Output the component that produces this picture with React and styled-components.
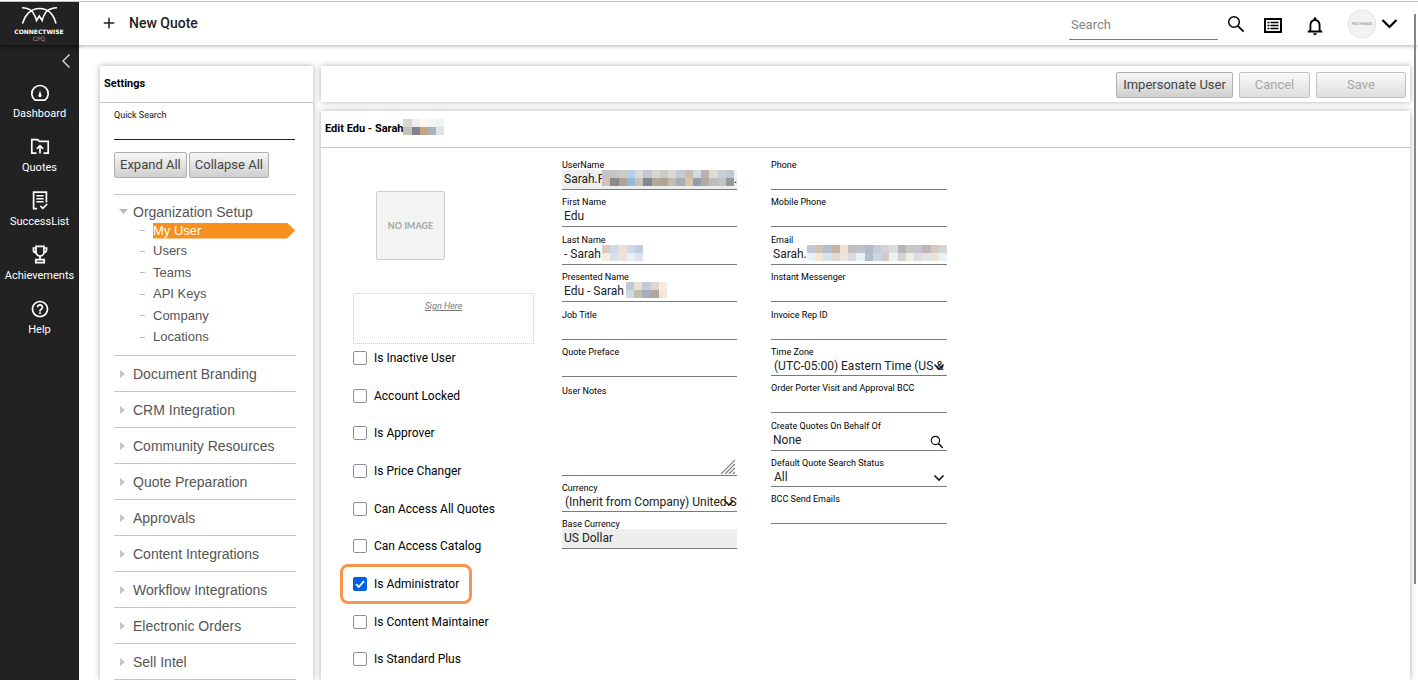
import React, { useState } from 'react';
import styled, { createGlobalStyle, css } from 'styled-components';
import { MdAdd, MdHelpOutline, MdNotificationsNone } from 'react-icons/md';

const GlobalStyles = createGlobalStyle`
  :root {
    --ink: #212121;
    --line: #c6c6c6;
    --field-line: #7a7a7a;
    --orange: #f7901e;
    --blue: #0060df;
    --nav: #222222;
  }

  * {
    box-sizing: border-box;
    margin: 0;
    padding: 0;
  }

  body {
    padding-top: 1px;
    background: #fff;
    color: #000;
    font-family: Roboto, 'Liberation Sans', sans-serif;
    font-size: 12px;
  }

  input, select, textarea, button {
    font-family: inherit;
  }
`;

const Shell = styled.div`
  position: relative;
  display: flex;
  height: calc(100vh - 1px);
  overflow: hidden;
  border-top: 1px solid #c4c4c4;
`;

const SideNav = styled.nav`
  flex: 0 0 79px;
  background: var(--nav);
  display: flex;
  flex-direction: column;
`;

const Brand = styled.a`
  display: block;
  height: 43px;
  box-shadow: 0 2px 4px rgba(0, 0, 0, 0.5);

  svg {
    display: block;
  }
`;

const Collapse = styled.button`
  align-self: flex-end;
  width: 14px;
  height: 16px;
  margin: 8px 6px 14px 0;
  border: 0;
  background: none;
`;

const NavItem = styled.a`
  display: flex;
  flex-direction: column;
  align-items: center;
  gap: 4px;
  height: 54px;
  color: #fff;
  font-size: 11px;
  line-height: 14px;
  text-decoration: none;

  svg {
    width: 20px;
    height: 20px;
  }
`;

const Page = styled.div`
  flex: 1;
  min-width: 0;
  display: flex;
  flex-direction: column;
`;

const Header = styled.header`
  flex: 0 0 43px;
  display: flex;
  align-items: center;
  padding: 0 20px 0 21px;
  background: #fff;
  box-shadow: 0 1px 4px rgba(0, 0, 0, 0.3);
`;

const NewQuote = styled.button`
  display: flex;
  align-items: center;
  gap: 11px;
  padding-bottom: 1px;
  border: 0;
  background: none;
  color: var(--ink);
  font-size: 14px;
  font-weight: 500;

  svg {
    width: 18px;
    height: 18px;
  }
`;

const SearchInput = styled.input`
  width: 149px;
  height: 30px;
  margin: 2px 9px 0 auto;
  padding: 0 2px;
  border: 0;
  border-bottom: 1px solid var(--field-line);
  font-size: 13px;
  outline: none;

  &::placeholder {
    color: #858585;
  }
`;

const HeaderIcons = styled.div`
  display: flex;
  align-items: center;
  gap: 18px;
`;

const IconButton = styled.button`
  display: flex;
  border: 0;
  background: none;
  color: #000;
`;

const ListButton = styled(IconButton)`
  padding-top: 4px;
`;

const BellButton = styled(IconButton)`
  padding: 4px 3px 0;
`;

const UserMenu = styled(IconButton)`
  align-items: center;
  gap: 4px;
`;

const Body = styled.main`
  flex: 1;
  min-height: 0;
  display: flex;
  gap: 8px;
  padding: 21px 8px 0 21px;
`;

const Card = styled.section`
  background: #fff;
  box-shadow: 0 0 6px rgba(0, 0, 0, 0.32);
`;

const SettingsCard = styled(Card)`
  flex: 0 0 213px;
`;

const CardTitle = styled.h2`
  display: flex;
  align-items: center;
  height: 37px;
  padding: 0 4px 2px;
  border-bottom: 1px solid var(--line);
  font-size: 11px;
  font-weight: 700;
`;

const SettingsBody = styled.div`
  padding: 5px 17px 0 14px;
`;

const QuickSearch = styled.label`
  display: block;
  padding-right: 1px;
  font-size: 9px;
  line-height: 14px;
  color: #111;

  input {
    display: block;
    width: 100%;
    height: 18px;
    border: 0;
    border-bottom: 1px solid #222;
    outline: none;
  }
`;

const ButtonRow = styled.div`
  display: flex;
  gap: 2px;
  padding: 12px 0 16px;
`;

const Button = styled.button`
  height: 26px;
  min-width: ${({ $width }) => $width || 0}px;
  padding: 0 5px 2px;
  border: 1px solid #b0b0b0;
  border-radius: 2px;
  background: linear-gradient(#f6f6f6, #cfcfcf);
  color: #444;
  font-size: 13px;
  white-space: nowrap;

  &:disabled {
    border-color: #c2c2c2;
    background: linear-gradient(#fafafa, #dedede);
    color: #a8a8a8;
  }
`;

const Tree = styled.ul`
  list-style: none;
  font-family: 'Liberation Sans', Arial, sans-serif;
`;

const TreeGroup = styled.li`
  border-top: 1px solid var(--line);
  padding-bottom: ${({ $open }) => ($open ? 7 : 0)}px;

  &:last-child {
    border-bottom: 1px solid var(--line);
  }
`;

const GroupButton = styled.button`
  display: flex;
  align-items: center;
  gap: 5px;
  width: 100%;
  height: ${({ $open }) => ($open ? 26 : 35)}px;
  padding: ${({ $open }) => ($open ? '7px 0 0 5px' : '0 0 0 5px')};
  border: 0;
  background: none;
  color: #555;
  font-size: 14px;
  text-align: left;

  svg {
    flex: none;
    width: 9px;
    height: 9px;
  }
`;

const SubList = styled.ul`
  list-style: none;
`;

const SubItem = styled.li`
  display: flex;
  align-items: center;
  height: 21px;
  padding-left: 26px;

  &:nth-child(even) {
    height: 22px;
  }

  &::before {
    content: '';
    width: 5px;
    height: 1px;
    margin-right: 8px;
    background: #bdbdbd;
  }

  a {
    flex: 1;
    margin-right: 1px;
    color: #555;
    font-size: 13px;
    line-height: 16px;
    text-decoration: none;
  }

  ${({ $active }) =>
    $active &&
    css`
      height: 19px;

      a {
        background: var(--orange);
        color: #fff;
        clip-path: polygon(0 0, 134px 0, 100% 50%, 134px 100%, 0 100%);
      }
    `}
`;

const Content = styled.div`
  flex: 1;
  min-width: 0;
  display: flex;
  flex-direction: column;
  gap: 9px;
`;

const Toolbar = styled(Card)`
  display: flex;
  justify-content: flex-end;
  align-items: center;
  gap: 6px;
  flex: 0 0 36px;
  padding: 2px 4px 0;
`;

const EditCard = styled(Card)`
  flex: 1;
  min-height: 0;
`;

const Form = styled.form`
  display: flex;
  padding: 4px 32px 0;
`;

const Profile = styled.div`
  flex: 0 0 181px;
  margin-right: 28px;
`;

const NoImage = styled.div`
  display: grid;
  place-items: center;
  width: 69px;
  height: 69px;
  margin: 39px 0 33px 23px;
  border: 1px solid #ccc;
  border-radius: 2px;
  background: #f3f3f3;
  color: #ababab;
  font-family: Lato, sans-serif;
  font-size: 9px;
  font-weight: 900;
`;

const SignBox = styled.div`
  height: 51px;
  margin-bottom: 7px;
  padding-top: 4px;
  border: 1px dotted #ccc;
  text-align: center;

  a {
    color: #777;
    font-size: 9px;
    font-style: italic;
    line-height: 14px;
  }
`;

const CheckList = styled.div`
  display: grid;
  grid-auto-rows: 1fr;
  justify-items: start;
  align-items: start;
  height: 339px;
`;

const CheckLabel = styled.label`
  position: relative;
  display: flex;
  align-items: center;
  gap: 7px;
  font-size: 12px;
  line-height: 14px;

  ${({ $highlight }) =>
    $highlight &&
    css`
      &::after {
        content: '';
        position: absolute;
        inset: -13px;
        border: 3px solid #f8954b;
        border-radius: 8px;
        pointer-events: none;
      }
    `}
`;

const CheckBox = styled.input`
  appearance: none;
  width: 14px;
  height: 14px;
  border: 1px solid #8f8f9d;
  border-radius: 2px;
  background: #fff;

  &:checked {
    border-color: var(--blue);
    background: var(--blue);
  }
`;

const Tick = styled.svg`
  position: absolute;
  top: 0;
  left: 0;
  width: 14px;
  height: 14px;
  pointer-events: none;
`;

const FieldColumn = styled.div`
  flex: 0 0 ${({ $width }) => $width}px;
  margin-right: 34px;
`;

const FieldGroup = styled.div`
  display: grid;
  grid-auto-rows: 1fr;
  height: 188px;
`;

const FieldBox = styled.div`
  display: flex;
  flex-direction: column;
  justify-content: flex-end;
  height: ${({ $height }) => $height}px;
  min-height: 0;
`;

const FieldLabel = styled.label`
  font-size: 9px;
  line-height: 10px;
`;

const Control = styled.div`
  position: relative;
  display: flex;
`;

const control = css`
  display: block;
  width: 100%;
  border: 0;
  border-bottom: 1px solid var(--field-line);
  border-radius: 0;
  background: transparent;
  color: var(--ink);
  font-size: 12px;
  outline: none;
`;

const TextInput = styled.input`
  ${control}
  height: 20px;
  padding: 0 2px 1px;

  &:read-only {
    background: #eeeeee;
  }
`;

const Select = styled.select`
  ${control}
  appearance: none;
  height: 19px;
  padding-left: 3px;
`;

const TextArea = styled.textarea`
  ${control}
  height: 80px;
  resize: none;
`;

const EndIcon = styled.svg`
  position: absolute;
  right: 2px;
  bottom: ${({ $bottom }) => $bottom}px;
  pointer-events: none;
`;

const LookupButton = styled(IconButton)`
  position: absolute;
  right: 3px;
  bottom: 2px;
`;

const Mosaic = styled.span`
  display: grid;
  grid-template-columns: repeat(${({ $cols }) => $cols}, 1fr);
  width: ${({ $width }) => $width}px;
  height: 16px;
`;

const Cell = styled.i`
  background: #${({ $color }) => $color};
`;

const TitleMask = styled.span`
  padding-bottom: 3px;
`;

const Cover = styled.span`
  position: absolute;
  top: 0;
  left: ${({ $left }) => $left}px;
  display: flex;
  align-items: end;
  pointer-events: none;
`;

const Scrollbar = styled.div`
  position: absolute;
  top: 12px;
  right: 2px;
  width: 2px;
  height: 84%;
  background: #868686;
`;

const masks = {
  title: [
    'd3d7cf f0edef fff9f0 f4f6f6 edf3f2',
    'c2c3b5 808488 c7a382 a3b5b8 dce7e3',
  ],
  userName: [
    'c3c3c6 c8c5c6 cfccc8 b5cfe9 dad9de c4c7cd d6d6d0 cdc9cb d9dad5 c6c9cf c8beb3 cfdae2 bab2b0 dedcd0 c6d0d5 c0c8d0',
    'd0c1ba 8b8b8b aea595 97b9de c8c4ba 85868e b3a99a b0a596 c4bbb5 a9aeb6 d6c4a3 929cac b4aa9f bbbcbc bfc6bf 92999f',
  ],
  lastName: [
    'dbcabb cdd9e6 ecdfd5 cdd7e7 c1cee0',
    'f9ebe0 d9dfea e9e2e0 e5eff4 dde3ee',
  ],
  presented: [
    'c2c8d0 e3e4d6 c6cad6 e0d8ce f6eae1',
    'c9dbe7 c5bca5 a8adbd b5a598 f5e6da',
  ],
  email: [
    'c2c8d5 d0c5b3 b4bfd1 c4b2a3 eee0d6 c6bcbd bdc2cb b1b8ca c2cbd0 d1d3d8 d8dcda b4b5ba c7c8c5 c5c4cf c2b4b0 d6c9c1 d2d5da',
    'eaf2f6 f1e8da d5e4ea dfd8d2 ede3dc dcdbe1 e8f0f3 b2bfc9 cad5e7 d1cac8 edf0ef d6d0d2 f3ece4 dadde3 e0e3e8 ede4d8 e8f1f6',
  ],
};

function Mask({ name, width }) {
  const rows = masks[name].map((row) => row.split(' '));
  return (
    <Mosaic $cols={rows[0].length} $width={width}>
      {rows.flat().map((color, i) => (
        <Cell key={i} $color={color} />
      ))}
    </Mosaic>
  );
}

function Logo() {
  return (
    <svg width="79" height="43" viewBox="0 2 79 43">
      <g fill="none" stroke="#fff" strokeWidth="1.6">
        <path d="M22.5 23.5C24.5 16 30 8.5 39.5 8.5S54 16 56 23.5" />
        <path d="M22 7.7C31 8 34 12 36.5 20.5L39.3 16L42.1 20.5C44.5 12 48 8 57 7.7" />
      </g>
      <text
        x="39"
        y="34"
        fill="#fff"
        fontFamily="'DejaVu Sans', sans-serif"
        fontSize="6"
        fontWeight="700"
        textAnchor="middle"
      >
        CONNECTWISE
      </text>
      <text
        x="39"
        y="41"
        fill="#999"
        fontFamily="'DejaVu Sans', sans-serif"
        fontSize="6"
        textAnchor="middle"
      >
        CPQ
      </text>
    </svg>
  );
}

const GaugeIcon = () => (
  <svg viewBox="0 0 20 20" fill="none" stroke="#fff" strokeWidth="1.7">
    <path d="M5 17.2A8.2 8.2 0 1 1 15 17.2Z" strokeLinejoin="round" />
    <path d="M10 7.5l1.4 4.4a1.5 1.5 0 1 1-2.8 0z" fill="#fff" stroke="none" />
  </svg>
);

const FolderUpIcon = () => (
  <svg viewBox="0 0 20 20" fill="none" stroke="#fff" strokeWidth="1.7">
    <path d="M6.5 16.2H1.8V2.6H7.6L9.4 4.4H18.2V16.2H13.5" />
    <path d="M10 16.5V9.5M6.8 11.8L10 8.6L13.2 11.8" />
  </svg>
);

const ListCheckIcon = () => (
  <svg viewBox="0 0 20 20" fill="none" stroke="#fff" strokeWidth="1.7">
    <path d="M7 17.6H3.6V1.2H16.4V11.5" />
    <path d="M6.4 4.8H13.6M6.4 7.8H13.6M6.4 10.8H13.6" strokeWidth="1.5" />
    <path d="M10.4 15L12.8 17.4L17.2 13" />
  </svg>
);

const TrophyIcon = () => (
  <svg viewBox="0 0 20 20" fill="none" stroke="#fff" strokeWidth="1.7">
    <path d="M6 1.4H14V7A4 4 0 0 1 6 7Z" />
    <path d="M6 3H3.4V4.8A3 3 0 0 0 6.4 7.8M14 3H16.6V4.8A3 3 0 0 1 13.6 7.8" />
    <path d="M10 11V14.5M5.8 14.6H14.2V17.6H5.8Z" />
  </svg>
);

const SearchIcon = ({ size }) => (
  <svg width={size} height={size} viewBox="0 0 18 18" fill="none" stroke="#000">
    <circle cx="7" cy="7" r="5.3" strokeWidth="1.5" />
    <path d="M10.8 10.8L16.6 16.6" strokeWidth="1.8" />
  </svg>
);

const ListBoxIcon = () => (
  <svg width="20" height="18" viewBox="0 0 20 18">
    <rect x="2" y="2" width="16" height="13" fill="none" stroke="#000" strokeWidth="2" />
    <path
      d="M4.5 5.5h2M7.5 5.5h8M4.5 8.5h2M7.5 8.5h8M4.5 11.5h2M7.5 11.5h8"
      stroke="#000"
      strokeWidth="1.6"
    />
  </svg>
);

const Avatar = () => (
  <svg width="30" height="30" viewBox="0 0 30 30">
    <circle cx="15" cy="15" r="14" fill="#f2f2f2" stroke="#e4e4e4" />
    <text
      x="15"
      y="16"
      fill="#a5a5a5"
      fontFamily="Lato, sans-serif"
      fontSize="4"
      fontWeight="900"
      textAnchor="middle"
    >
      NO IMAGE
    </text>
  </svg>
);

function Field({ id, label, value = '', height, readOnly, mask, end }) {
  return (
    <FieldBox $height={height}>
      <FieldLabel htmlFor={id}>{label}</FieldLabel>
      <Control>
        <TextInput
          id={id}
          defaultValue={value}
          {...(readOnly ? { readOnly: true } : {})}
        />
        {mask && (
          <Cover $left={mask.left}>
            <Mask name={mask.name} width={mask.width} />
            {mask.tail}
          </Cover>
        )}
        {end}
      </Control>
    </FieldBox>
  );
}

function SelectField({ id, label, value }) {
  return (
    <FieldBox $height={36}>
      <FieldLabel htmlFor={id}>{label}</FieldLabel>
      <Control>
        <Select id={id} defaultValue={value}>
          <option>{value}</option>
        </Select>
        <EndIcon $bottom={5} width="12" height="8" viewBox="0 0 12 8">
          <path d="M1.5 1.5L6 6L10.5 1.5" fill="none" stroke="#111" strokeWidth="1.6" />
        </EndIcon>
      </Control>
    </FieldBox>
  );
}

const navItems = [
  ['Dashboard', GaugeIcon],
  ['Quotes', FolderUpIcon],
  ['SuccessList', ListCheckIcon],
  ['Achievements', TrophyIcon],
  ['Help', MdHelpOutline],
];

const orgPages = ['My User', 'Users', 'Teams', 'API Keys', 'Company', 'Locations'];

const groups = [
  'Document Branding',
  'CRM Integration',
  'Community Resources',
  'Quote Preparation',
  'Approvals',
  'Content Integrations',
  'Workflow Integrations',
  'Electronic Orders',
  'Sell Intel',
];

const permissions = [
  'Is Inactive User',
  'Account Locked',
  'Is Approver',
  'Is Price Changer',
  'Can Access All Quotes',
  'Can Access Catalog',
  'Is Administrator',
  'Is Content Maintainer',
  'Is Standard Plus',
];

function App() {
  const [granted, setGranted] = useState({ 'Is Administrator': true });

  const toggle = (name) =>
    setGranted((prev) => ({ ...prev, [name]: !prev[name] }));

  return (
    <>
      <GlobalStyles />
      <Shell>
        <SideNav>
          <Brand href="#home">
            <Logo />
          </Brand>
          <Collapse type="button" aria-label="Collapse menu">
            <svg width="14" height="16" viewBox="0 0 14 16">
              <path d="M10.5 1.5L4 8L10.5 14.5" fill="none" stroke="#ccc" strokeWidth="1.5" />
            </svg>
          </Collapse>
          {navItems.map(([name, Icon]) => (
            <NavItem key={name} href={`#${name}`}>
              <Icon />
              {name}
            </NavItem>
          ))}
        </SideNav>

        <Page>
          <Header>
            <NewQuote type="button">
              <MdAdd />
              New Quote
            </NewQuote>
            <SearchInput type="search" placeholder="Search" aria-label="Search" />
            <HeaderIcons>
              <IconButton type="button" aria-label="Run search">
                <SearchIcon size={18} />
              </IconButton>
              <ListButton type="button" aria-label="Lists">
                <ListBoxIcon />
              </ListButton>
              <BellButton type="button" aria-label="Notifications">
                <MdNotificationsNone size={22} />
              </BellButton>
              <UserMenu type="button" aria-label="Account">
                <Avatar />
                <svg width="17" height="12" viewBox="0 0 17 12">
                  <path d="M1.5 2L8.5 9L15.5 2" fill="none" stroke="#000" strokeWidth="2.2" />
                </svg>
              </UserMenu>
            </HeaderIcons>
          </Header>

          <Body>
            <SettingsCard>
              <CardTitle>Settings</CardTitle>
              <SettingsBody>
                <QuickSearch>
                  Quick Search
                  <input type="text" />
                </QuickSearch>
                <ButtonRow>
                  <Button type="button">Expand All</Button>
                  <Button type="button">Collapse All</Button>
                </ButtonRow>
                <Tree>
                  <TreeGroup $open>
                    <GroupButton type="button" $open>
                      <svg viewBox="0 0 9 9">
                        <path d="M0 2H9L4.5 7Z" fill="#b9b9b9" />
                      </svg>
                      Organization Setup
                    </GroupButton>
                    <SubList>
                      {orgPages.map((name, i) => (
                        <SubItem key={name} $active={i === 0}>
                          <a href={`#${name}`}>{name}</a>
                        </SubItem>
                      ))}
                    </SubList>
                  </TreeGroup>
                  {groups.map((name) => (
                    <TreeGroup key={name}>
                      <GroupButton type="button">
                        <svg viewBox="0 0 9 9">
                          <path d="M1 1L6 5L1 9Z" fill="#c4c4c4" />
                        </svg>
                        {name}
                      </GroupButton>
                    </TreeGroup>
                  ))}
                </Tree>
              </SettingsBody>
            </SettingsCard>

            <Content>
              <Toolbar>
                <Button type="button" $width={117}>
                  Impersonate User
                </Button>
                <Button type="button" $width={71} disabled>
                  Cancel
                </Button>
                <Button type="button" $width={90} disabled>
                  Save
                </Button>
              </Toolbar>

              <EditCard>
                <CardTitle>
                  Edit Edu - Sarah
                  <TitleMask>
                    <Mask name="title" width={41} />
                  </TitleMask>
                </CardTitle>
                <Form>
                  <Profile>
                    <NoImage>NO IMAGE</NoImage>
                    <SignBox>
                      <a href="#sign">Sign Here</a>
                    </SignBox>
                    <CheckList>
                      {permissions.map((name) => (
                        <CheckLabel
                          key={name}
                          $highlight={name === 'Is Administrator'}
                        >
                          <CheckBox
                            type="checkbox"
                            checked={!!granted[name]}
                            onChange={() => toggle(name)}
                          />
                          {granted[name] && (
                            <Tick viewBox="0 0 14 14">
                              <path
                                d="M3 7.2L5.8 10L11 4.2"
                                fill="none"
                                stroke="#fff"
                                strokeWidth="1.8"
                              />
                            </Tick>
                          )}
                          {name}
                        </CheckLabel>
                      ))}
                    </CheckList>
                  </Profile>

                  <FieldColumn $width={175}>
                    <FieldGroup>
                      <Field
                        id="userName"
                        label="UserName"
                        value="Sarah.F"
                        readOnly
                        mask={{ name: 'userName', left: 40, width: 132, tail: '.' }}
                      />
                      <Field id="firstName" label="First Name" value="Edu" />
                      <Field
                        id="lastName"
                        label="Last Name"
                        value="- Sarah"
                        mask={{ name: 'lastName', left: 40, width: 41 }}
                      />
                      <Field
                        id="presentedName"
                        label="Presented Name"
                        value="Edu - Sarah"
                        mask={{ name: 'presented', left: 64, width: 41 }}
                      />
                      <Field id="jobTitle" label="Job Title" />
                    </FieldGroup>
                    <Field id="preface" label="Quote Preface" height={37} />
                    <FieldBox $height={99}>
                      <FieldLabel htmlFor="notes">User Notes</FieldLabel>
                      <Control>
                        <TextArea id="notes" />
                        <EndIcon $bottom={2} width="14" height="14" viewBox="0 0 14 14">
                          <path
                            d="M0 14L14 0M4 14L14 4M8 14L14 8M12 14L14 12"
                            stroke="#777"
                            strokeWidth="1.2"
                          />
                        </EndIcon>
                      </Control>
                    </FieldBox>
                    <SelectField
                      id="currency"
                      label="Currency"
                      value="(Inherit from Company) United States Dollar"
                    />
                    <Field
                      id="baseCurrency"
                      label="Base Currency"
                      value="US Dollar"
                      height={37}
                      readOnly
                    />
                  </FieldColumn>

                  <FieldColumn $width={176}>
                    <FieldGroup>
                      <Field id="phone" label="Phone" />
                      <Field id="mobile" label="Mobile Phone" />
                      <Field
                        id="email"
                        label="Email"
                        value="Sarah."
                        mask={{ name: 'email', left: 36, width: 140 }}
                      />
                      <Field id="messenger" label="Instant Messenger" />
                      <Field id="repId" label="Invoice Rep ID" />
                    </FieldGroup>
                    <SelectField
                      id="timeZone"
                      label="Time Zone"
                      value="(UTC-05:00) Eastern Time (US & Canada)"
                    />
                    <Field
                      id="approvalBcc"
                      label="Order Porter Visit and Approval BCC"
                      height={37}
                    />
                    <Field
                      id="behalfOf"
                      label="Create Quotes On Behalf Of"
                      value="None"
                      height={38}
                      end={
                        <LookupButton type="button" aria-label="Find user">
                          <SearchIcon size={14} />
                        </LookupButton>
                      }
                    />
                    <SelectField
                      id="status"
                      label="Default Quote Search Status"
                      value="All"
                    />
                    <Field id="sendBcc" label="BCC Send Emails" height={37} />
                  </FieldColumn>
                </Form>
              </EditCard>
            </Content>
          </Body>
        </Page>
        <Scrollbar />
      </Shell>
    </>
  );
}

export default App;
